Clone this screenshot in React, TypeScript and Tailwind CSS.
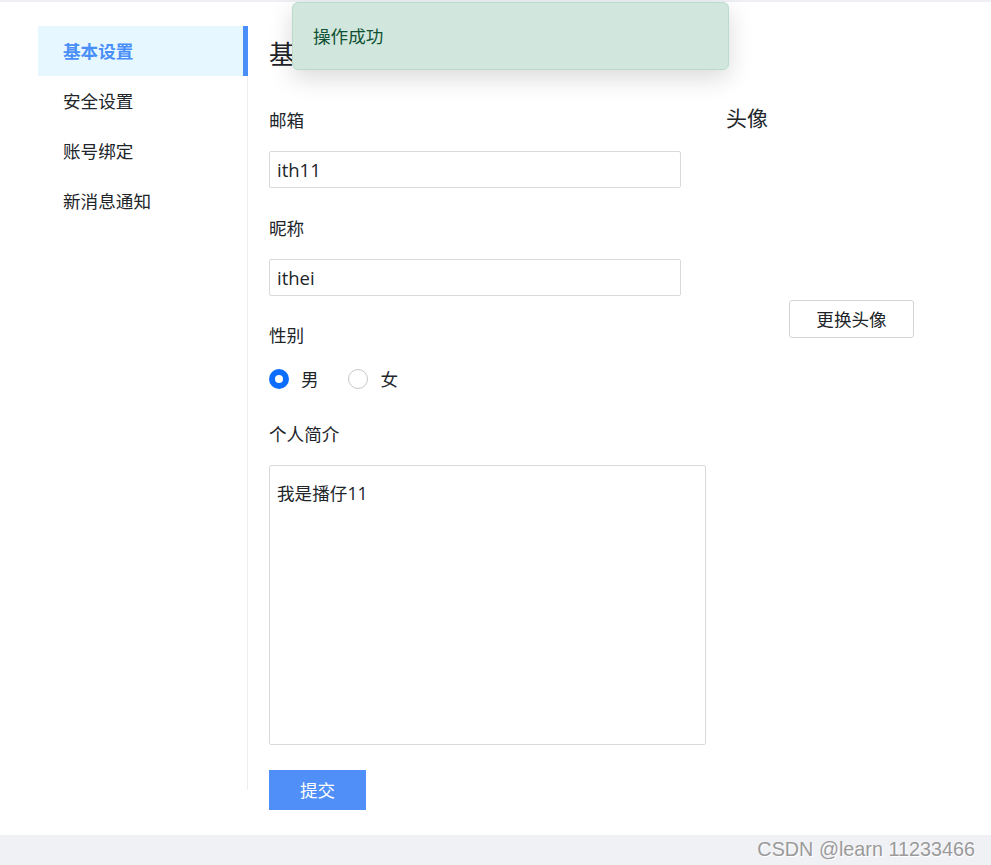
import React from "react";

const font = "font-['Open_Sans','Noto_Sans_CJK_SC',sans-serif]";

export default function App() {
  const menu = ["基本设置", "安全设置", "账号绑定", "新消息通知"];
  return (
    <div className={`relative w-[991px] h-[865px] bg-white flex flex-col text-[#212529] ${font}`}>
      <div className="h-[2px] bg-[#eef0f3]" />
      <div className="h-[833px] flex items-start pl-[38px] pt-[24px]">
        {/* Sidebar */}
        <div className="w-[210px] h-[764px] border-r border-[#eeeeee] flex flex-col">
          {menu.map((m, i) =>
            i === 0 ? (
              <div
                key={m}
                className="h-[50px] flex items-center pl-[25px] bg-[#e6f7ff] border-r-[5px] border-[#4a8ff7] mr-[-1px] text-[17.6px] font-bold text-[#4a8ff7] leading-[26px]"
              >
                {m}
              </div>
            ) : (
              <div key={m} className="h-[50px] flex items-center pl-[25px] text-[17.6px] leading-[26px] text-[#212529]">
                {m}
              </div>
            )
          )}
        </div>

        {/* Content */}
        <div className="flex pl-[21px]">
          <div className="w-[437px] flex flex-col">
            <div className="mt-[10px] h-[36px] leading-[36px] text-[26px]">基本设置</div>
            <div className="mt-[35px] h-[26px] leading-[26px] text-[17.6px]">邮箱</div>
            <div className="mt-[18px] w-[412px] h-[37px] border border-[#d9d9d9] rounded-[2px] flex items-center px-[7px] text-[18.5px]">
              ith11
            </div>
            <div className="mt-[27px] h-[26px] leading-[26px] text-[17.6px]">昵称</div>
            <div className="mt-[18px] w-[412px] h-[37px] border border-[#d9d9d9] rounded-[2px] flex items-center px-[7px] text-[18.5px]">
              ithei
            </div>
            <div className="mt-[26px] h-[26px] leading-[26px] text-[17.6px]">性别</div>
            <div className="mt-[18px] h-[26px] flex items-center text-[17.6px]">
              <span className="w-[20px] h-[20px] rounded-full bg-[#0d6efd] flex items-center justify-center">
                <span className="w-[8px] h-[8px] rounded-full bg-white" />
              </span>
              <span className="ml-[12px] leading-[26px]">男</span>
              <span className="ml-[29px] w-[20px] h-[20px] rounded-full border border-[#c8c8c8] bg-white" />
              <span className="ml-[13px] leading-[26px]">女</span>
            </div>
            <div className="mt-[29px] h-[26px] leading-[26px] text-[17.6px]">个人简介</div>
            <div className="mt-[18px] w-[437px] h-[280px] border border-[#d9d9d9] rounded-[2px] px-[7px] pt-[14px] text-[17.6px] leading-[26px]">
              我是播仔11
            </div>
            <div className="mt-[25px] w-[97px] h-[40px] bg-[#4f8ff7] text-white text-[17.6px] flex items-center justify-center">
              提交
            </div>
          </div>
          <div className="ml-[20px] w-[250px] flex flex-col">
            <div className="mt-[77px] h-[30px] leading-[30px] text-[21px]">头像</div>
            <div className="mt-[167px] ml-[63px] w-[125px] h-[38px] border border-[#d4d4d4] rounded-[3px] flex items-center justify-center text-[17.6px]">
              更换头像
            </div>
          </div>
        </div>
      </div>
      <div className="h-[30px] bg-[#f0f1f4] flex items-center justify-end pr-[16px]">
        <span className="font-['Liberation_Sans',sans-serif] text-[19.8px] text-[#9a9a9a] [text-shadow:1px_1px_0_#ffffff]">
          CSDN @learn 11233466
        </span>
      </div>

      {/* Toast */}
      <div className="absolute left-[292px] top-[2px] w-[437px] h-[68px] bg-[#d1e7dd] border border-[#badbcc] rounded-[6px] shadow-[0_8px_24px_rgba(0,0,0,0.15)] flex items-center pl-[20px] text-[#0f5132] text-[17.6px]">
        操作成功
      </div>
    </div>
  );
}
